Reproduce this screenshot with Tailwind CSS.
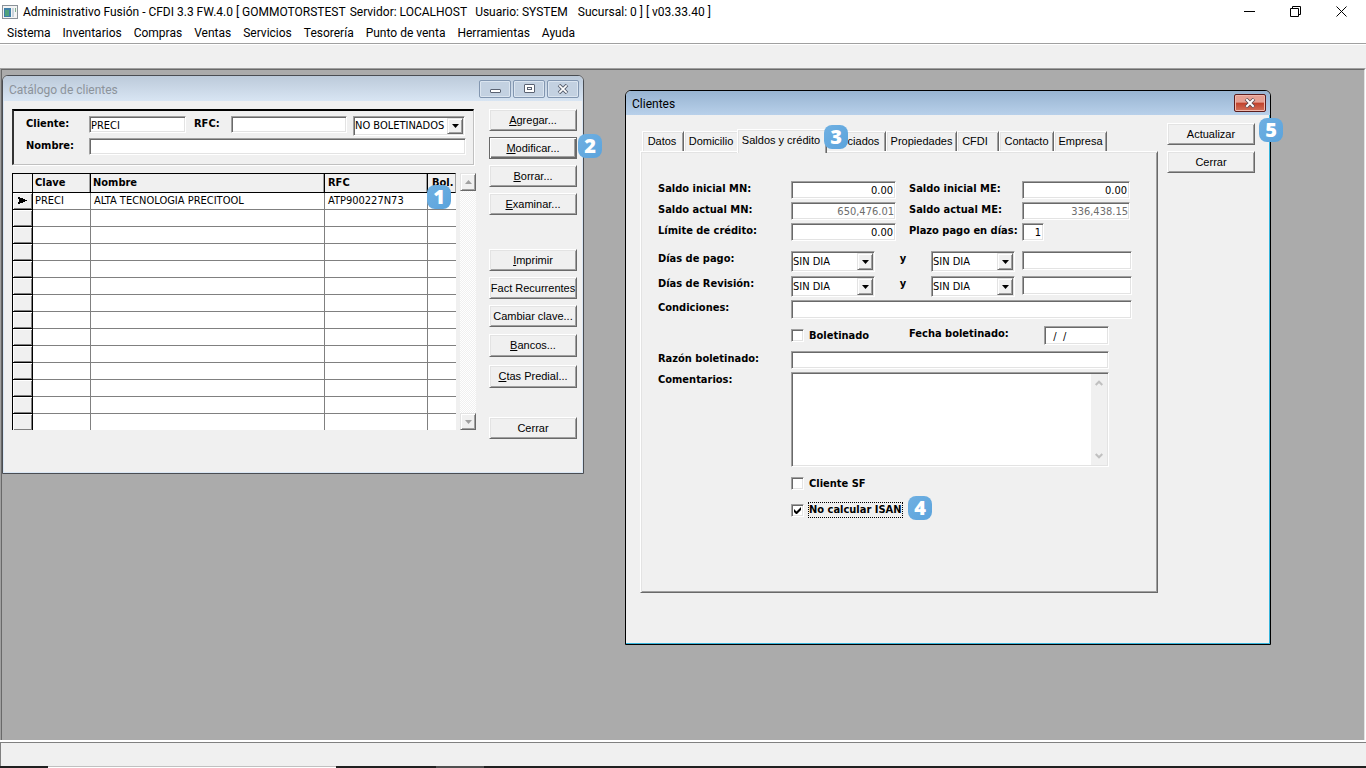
<!DOCTYPE html>
<html lang="es">
<head>
  <meta charset="UTF-8" />
  <title>Administrativo Fusión</title>
  <script src="https://cdn.jsdelivr.net/npm/@tailwindcss/browser@4"></script>
</head>
<body class="flex flex-col h-screen overflow-hidden bg-white text-black text-[12px] font-[Roboto,'Open_Sans',sans-serif]">

  <!-- Title bar -->
  <header class="flex items-center h-[23px] shrink-0 pl-[2px]">
    <svg class="w-4 h-[14px] mr-[5px]" viewBox="0 0 16 14">
      <rect x="0.5" y="0.5" width="15" height="13" fill="#f4f4f4" stroke="#8b9299" />
      <rect x="2" y="3" width="7" height="9" fill="#3f7fa8" />
      <rect x="3" y="5" width="4" height="6" fill="#4fa27c" />
      <rect x="10" y="3" width="2" height="9" fill="#c9d3dc" />
      <rect x="13" y="3" width="1" height="4" fill="#7fb08f" />
    </svg>
    <h1 class="flex whitespace-nowrap">
      <span>Administrativo Fusión - CFDI 3.3 FW.4.0 [ GOMMOTORSTEST</span>
      <span class="ml-1">Servidor: LOCALHOST</span>
      <span class="ml-2">Usuario: SYSTEM</span>
      <span class="ml-[10px]">Sucursal: 0 ] [ v03.33.40 ]</span>
    </h1>
    <div class="flex ml-auto mr-[2px]">
      <button class="grid place-items-center w-[46px] h-5" aria-label="Minimizar"><svg class="w-[11px] h-[11px]" viewBox="0 0 11 11"><path d="M0 5.5h11" stroke="#000" /></svg></button>
      <button class="grid place-items-center w-[46px] h-5" aria-label="Restaurar"><svg class="w-[11px] h-[11px]" viewBox="0 0 11 11" fill="none" stroke="#000"><path d="M0.5 2.5h8v8h-8z M2.5 2.5v-2h8v8h-2" /></svg></button>
      <button class="grid place-items-center w-[46px] h-5" aria-label="Cerrar ventana"><svg class="w-[11px] h-[11px]" viewBox="0 0 11 11"><path d="M0.5 0.5l10 10M10.5 0.5l-10 10" stroke="#000" /></svg></button>
    </div>
  </header>

  <!-- Menu -->
  <nav class="flex gap-3 items-center h-5 shrink-0 pl-[7px]">
    <a href="#">Sistema</a>
    <a href="#">Inventarios</a>
    <a href="#">Compras</a>
    <a href="#">Ventas</a>
    <a href="#">Servicios</a>
    <a href="#">Tesorería</a>
    <a href="#">Punto de venta</a>
    <a href="#">Herramientas</a>
    <a href="#">Ayuda</a>
  </nav>
  <div class="h-[25px] shrink-0 bg-[#f0f0f0] border-t border-[#a0a0a0] shadow-[inset_0_1px_#ffffff]"></div>

  <!-- Desktop -->
  <main class="flex flex-1 min-h-0 border-t border-l border-r border-t-[#a0a0a0] border-l-[#a0a0a0] border-r-white text-[11px]">
  <div class="relative flex-1 bg-[#ababab] border-t border-l border-r border-t-[#696969] border-l-[#696969] border-r-[#e3e3e3]">

    <!-- Customer catalogue -->
    <section class="absolute left-0 top-[5px] w-[582px] h-[399px] flex flex-col bg-[#f0f0f0] border border-[#4a4d52] rounded-t-md overflow-hidden">
      <div class="flex items-center h-[25px] shrink-0 pl-[6px] pr-1 bg-linear-to-b from-[#bccada] to-[#d8e5f3] text-[12px] text-[#8c939b]">
        <h2 class="flex-1 pt-[2px]">Catálogo de clientes</h2>
        <div class="flex gap-[2px]">
          <button class="grid place-items-center w-8 h-[18px] rounded-xs border border-[#8296b0] bg-[#c3d1e1] shadow-[inset_0_0_0_1px_#dbe5f0]" aria-label="Minimizar"><svg class="w-[11px] h-[10px]" viewBox="0 0 11 10"><rect x="0.5" y="5.5" width="10" height="3" rx="0.5" fill="#fff" stroke="#5a6272" /></svg></button>
          <button class="grid place-items-center w-8 h-[18px] rounded-xs border border-[#8296b0] bg-[#c3d1e1] shadow-[inset_0_0_0_1px_#dbe5f0]" aria-label="Maximizar"><svg class="w-[11px] h-[9px]" viewBox="0 0 11 9" fill="#fff" stroke="#5a6272"><rect x="0.5" y="0.5" width="10" height="8" rx="0.5" /><rect x="3.5" y="3.5" width="4" height="2" /></svg></button>
          <button class="grid place-items-center w-8 h-[18px] rounded-xs border border-[#8296b0] bg-[#c3d1e1] shadow-[inset_0_0_0_1px_#dbe5f0]" aria-label="Cerrar"><svg class="w-[12px] h-[10px]" viewBox="0 0 12 10"><path d="M2 1l8 8M10 1l-8 8" stroke="#5a6272" stroke-width="3.6" /><path d="M2.3 1.3l7.4 7.4M9.7 1.3l-7.4 7.4" stroke="#fff" stroke-width="1.7" /></svg></button>
        </div>
      </div>
      <div class="flex flex-1 gap-[13px] pl-2 pt-2 border-x border-b border-[#d9e6f4]">
        <div class="w-[464px]">
          <form class="w-[462px] h-14 pt-[5px] pl-3 border-t-2 border-l-2 border-b border-r border-t-black border-l-[#333333] border-b-[#c0c0c0] border-r-[#c0c0c0] shadow-[1px_1px_#ffffff] font-['DejaVu_Sans_Condensed','DejaVu_Sans',sans-serif]">
            <div class="flex items-start h-5">
              <label for="cliente" class="w-[63px] leading-[15px] font-bold">Cliente:</label>
              <input id="cliente" value="PRECI" class="w-[97px] h-[17px] px-px pt-px bg-white border border-t-[#a0a0a0] border-l-[#a0a0a0] border-b-white border-r-white shadow-[inset_1px_1px_#696969,inset_-1px_-1px_#e3e3e3]" />
              <label for="rfc" class="w-[37px] ml-2 leading-[15px] font-bold">RFC:</label>
              <input id="rfc" class="w-[116px] h-[17px] px-[2px] bg-white border border-t-[#a0a0a0] border-l-[#a0a0a0] border-b-white border-r-white shadow-[inset_1px_1px_#696969,inset_-1px_-1px_#e3e3e3]" />
              <div class="relative w-28 h-5 ml-[6px]">
                <select aria-label="Boletinados" class="appearance-none w-full h-full pl-px pt-px bg-white border border-t-[#a0a0a0] border-l-[#a0a0a0] border-b-white border-r-white shadow-[inset_1px_1px_#696969,inset_-1px_-1px_#e3e3e3]"><option>NO BOLETINADOS</option></select>
                <span class="absolute right-[2px] top-[2px] bottom-[2px] w-4 grid place-items-center bg-[#f0f0f0] border border-t-[#e3e3e3] border-l-[#e3e3e3] border-b-[#696969] border-r-[#696969] shadow-[inset_1px_1px_#ffffff,inset_-1px_-1px_#a0a0a0] pointer-events-none"><svg class="w-[7px] h-1" viewBox="0 0 7 4"><path d="M0 0h7L3.5 4z" /></svg></span>
              </div>
            </div>
            <div class="flex items-start mt-[2px]">
              <label for="nombre" class="w-[63px] leading-[15px] font-bold">Nombre:</label>
              <input id="nombre" class="w-[377px] h-[17px] px-[2px] bg-white border border-t-[#a0a0a0] border-l-[#a0a0a0] border-b-white border-r-white shadow-[inset_1px_1px_#696969,inset_-1px_-1px_#e3e3e3]" />
            </div>
          </form>

          <div class="flex justify-between mt-2 h-[257px]">
            <div class="w-[444px] overflow-hidden bg-white">
              <table class="w-full table-fixed border-separate border-spacing-0 font-['DejaVu_Sans_Condensed','DejaVu_Sans',sans-serif] leading-4">
                <colgroup><col class="w-[21px]" /><col class="w-[58px]" /><col class="w-[234px]" /><col class="w-[103px]" /><col class="w-7" /></colgroup>
                <thead class="leading-[18px]">
                  <tr class="h-5 bg-[#f0f0f0] text-left align-top">
                    <th class="p-0 border-y border-x border-black"></th>
                    <th class="p-0 pl-[2px] border-y border-r border-black shadow-[inset_-1px_0_#a0a0a0]">Clave</th>
                    <th class="p-0 pl-[2px] border-y border-r border-black shadow-[inset_-1px_0_#a0a0a0]">Nombre</th>
                    <th class="p-0 pl-[3px] border-y border-r border-black shadow-[inset_-1px_0_#a0a0a0]">RFC</th>
                    <th class="p-0 pl-1 border-y border-r border-y-black border-r-[#a0a0a0]">Bol.</th>
                  </tr>
                </thead>
                <tbody id="filas">
                  <tr class="h-[17px] align-top">
                    <td class="p-0 border-x border-b border-black bg-[#f0f0f0] shadow-[inset_1px_1px_#ffffff,inset_-1px_-1px_#808080]"><svg class="w-[9px] h-[7px] mt-1 ml-[5px]" viewBox="0 0 9 7"><path d="M0 0h2v1h3v1h2v1h2v1h-2v1h-2v1h-3v1h-2v-2h1v-3h-1z" /></svg></td>
                    <td class="p-0 pl-[2px] border-r border-b border-[#808080]">PRECI</td>
                    <td class="p-0 pl-[3px] border-r border-b border-[#808080]">ALTA TECNOLOGIA PRECITOOL</td>
                    <td class="p-0 pl-[3px] border-r border-b border-[#808080]">ATP900227N73</td>
                    <td class="p-0 border-b border-[#808080]"></td>
                  </tr>
                </tbody>
              </table>
            </div>
            <div class="flex flex-col justify-between w-4 bg-[repeating-conic-gradient(#ffffff_0_25%,#f0f0f0_0_50%)] bg-[length:2px_2px]">
              <button class="grid place-items-center h-[18px] bg-[#f0f0f0] border border-t-[#e3e3e3] border-l-[#e3e3e3] border-b-[#696969] border-r-[#696969] shadow-[inset_1px_1px_#ffffff,inset_-1px_-1px_#a0a0a0]" aria-label="Subir"><svg class="w-[7px] h-1" viewBox="0 0 7 4"><path d="M0 4h7L3.5 0z" fill="#a0a0a0" /></svg></button>
              <button class="grid place-items-center h-[17px] bg-[#f0f0f0] border border-t-[#e3e3e3] border-l-[#e3e3e3] border-b-[#696969] border-r-[#696969] shadow-[inset_1px_1px_#ffffff,inset_-1px_-1px_#a0a0a0]" aria-label="Bajar"><svg class="w-[7px] h-1" viewBox="0 0 7 4"><path d="M0 0h7L3.5 4z" fill="#a0a0a0" /></svg></button>
            </div>
          </div>
        </div>

        <div class="flex flex-col gap-[6px] w-[88px] font-['Liberation_Sans',Arial,sans-serif]">
          <button class="h-[22px] bg-[#f0f0f0] border border-t-white border-l-white border-b-[#696969] border-r-[#696969] shadow-[inset_1px_1px_#e3e3e3,inset_-1px_-1px_#a0a0a0]"><u>A</u>gregar...</button>
          <button class="h-[22px] bg-[#f0f0f0] border border-[#696969] shadow-[inset_1px_1px_#ffffff,inset_-1px_-1px_#696969,inset_-2px_-2px_#a0a0a0]"><u>M</u>odificar...</button>
          <button class="h-[22px] bg-[#f0f0f0] border border-t-white border-l-white border-b-[#696969] border-r-[#696969] shadow-[inset_1px_1px_#e3e3e3,inset_-1px_-1px_#a0a0a0]"><u>B</u>orrar...</button>
          <button class="h-[22px] bg-[#f0f0f0] border border-t-white border-l-white border-b-[#696969] border-r-[#696969] shadow-[inset_1px_1px_#e3e3e3,inset_-1px_-1px_#a0a0a0]"><u>E</u>xaminar...</button>
          <button class="h-[22px] mt-7 bg-[#f0f0f0] border border-t-white border-l-white border-b-[#696969] border-r-[#696969] shadow-[inset_1px_1px_#e3e3e3,inset_-1px_-1px_#a0a0a0]"><u>I</u>mprimir</button>
          <button class="h-[22px] whitespace-nowrap bg-[#f0f0f0] border border-t-white border-l-white border-b-[#696969] border-r-[#696969] shadow-[inset_1px_1px_#e3e3e3,inset_-1px_-1px_#a0a0a0]">Fact Recurrentes</button>
          <button class="h-[22px] bg-[#f0f0f0] border border-t-white border-l-white border-b-[#696969] border-r-[#696969] shadow-[inset_1px_1px_#e3e3e3,inset_-1px_-1px_#a0a0a0]">Cambiar clave...</button>
          <button class="h-[23px] mt-px bg-[#f0f0f0] border border-t-white border-l-white border-b-[#696969] border-r-[#696969] shadow-[inset_1px_1px_#e3e3e3,inset_-1px_-1px_#a0a0a0]"><u>B</u>ancos...</button>
          <button class="h-[23px] mt-[2px] bg-[#f0f0f0] border border-t-white border-l-white border-b-[#696969] border-r-[#696969] shadow-[inset_1px_1px_#e3e3e3,inset_-1px_-1px_#a0a0a0]"><u>C</u>tas Predial...</button>
          <button class="h-[22px] mt-[23px] bg-[#f0f0f0] border border-t-white border-l-white border-b-[#696969] border-r-[#696969] shadow-[inset_1px_1px_#e3e3e3,inset_-1px_-1px_#a0a0a0]">Cerrar</button>
        </div>
      </div>
    </section>

    <!-- Customer detail -->
    <section class="absolute left-[623px] top-5 w-[646px] h-[555px] flex flex-col bg-[#f0f0f0] border border-black rounded-t-md overflow-hidden">
      <div class="flex items-center h-6 shrink-0 pl-[6px] pr-1 bg-linear-to-b from-[#98b4d1] to-[#b8d0ea] text-[12px]">
        <h2 class="flex-1 pt-[2px]">Clientes</h2>
        <button class="grid place-items-center w-8 h-[18px] rounded-xs border border-[#5c1d1d] bg-linear-to-b from-[#e5a093] from-45% via-[#c1412b] via-50% to-[#d2705a] shadow-[inset_0_0_0_1px_#f0b8ac]" aria-label="Cerrar"><svg class="w-[12px] h-[10px]" viewBox="0 0 12 10"><path d="M2 1l8 8M10 1l-8 8" stroke="#5a4a50" stroke-width="3.6" /><path d="M2.3 1.3l7.4 7.4M9.7 1.3l-7.4 7.4" stroke="#fff" stroke-width="2" /></svg></button>
      </div>
      <div class="flex flex-1 items-start gap-[9px] pl-[14px] pt-2 border-r border-b border-[#37b5dc]">
        <div class="w-[518px] mt-[6px]">
          <div role="tablist" class="flex items-end h-[22px] pl-[2px] font-['Liberation_Sans',Arial,sans-serif]">
            <button role="tab" class="w-[42px] h-5 pr-[2px] border-t border-l border-t-white border-l-white border-r border-r-[#696969] shadow-[inset_1px_1px_#e3e3e3,inset_-1px_0_#a0a0a0]">Datos</button>
            <button role="tab" class="w-[53px] h-5 border-t border-l border-white shadow-[inset_1px_1px_#e3e3e3]">Domicilio</button>
            <button role="tab" aria-selected="true" class="relative z-10 w-[90px] h-6 -mb-[2px] pb-[2px] pr-[2px] bg-[#f0f0f0] border-t border-l border-t-white border-l-white border-r border-r-[#696969] shadow-[inset_1px_1px_#e3e3e3,inset_-1px_0_#a0a0a0]">Saldos y crédito</button>
            <button role="tab" class="w-[59px] h-5 pr-1 border-t border-r border-t-white border-r-[#696969] shadow-[inset_0_1px_#e3e3e3,inset_-1px_0_#a0a0a0]">Asociados</button>
            <button role="tab" class="w-[71px] h-5 border-t border-l border-t-white border-l-white border-r border-r-[#696969] shadow-[inset_1px_1px_#e3e3e3,inset_-1px_0_#a0a0a0]">Propiedades</button>
            <button role="tab" class="w-[42px] h-5 pr-[6px] border-t border-l border-t-white border-l-white border-r border-r-[#696969] shadow-[inset_1px_1px_#e3e3e3,inset_-1px_0_#a0a0a0]">CFDI</button>
            <button role="tab" class="w-[55px] h-5 border-t border-l border-t-white border-l-white border-r border-r-[#696969] shadow-[inset_1px_1px_#e3e3e3,inset_-1px_0_#a0a0a0]">Contacto</button>
            <button role="tab" class="w-[53px] h-5 border-t border-l border-t-white border-l-white border-r border-r-[#696969] shadow-[inset_1px_1px_#e3e3e3,inset_-1px_0_#a0a0a0]">Empresa</button>
          </div>

          <form role="tabpanel" class="h-[442px] pt-[29px] pl-[17px] border border-t-white border-l-white border-b-[#696969] border-r-[#696969] shadow-[inset_1px_1px_#e3e3e3,inset_-1px_-1px_#a0a0a0] font-['DejaVu_Sans_Condensed','DejaVu_Sans',sans-serif] leading-[15px]">
            <div class="flex flex-col gap-[3px]">
              <div class="flex items-start">
                <label for="simn" class="w-[133px] font-bold">Saldo inicial MN:</label>
                <input id="simn" value="0.00" class="w-[105px] h-[18px] px-[2px] text-right bg-white border border-t-[#a0a0a0] border-l-[#a0a0a0] border-b-white border-r-white shadow-[inset_1px_1px_#696969,inset_-1px_-1px_#e3e3e3]" />
                <label for="sime" class="w-[113px] ml-[13px] font-bold">Saldo inicial ME:</label>
                <input id="sime" value="0.00" class="w-[108px] h-[18px] px-[2px] text-right bg-white border border-t-[#a0a0a0] border-l-[#a0a0a0] border-b-white border-r-white shadow-[inset_1px_1px_#696969,inset_-1px_-1px_#e3e3e3]" />
              </div>
              <div class="flex items-start">
                <label for="samn" class="w-[133px] font-bold">Saldo actual MN:</label>
                <input id="samn" value="650,476.01" disabled class="w-[105px] h-[18px] px-px pt-px text-right text-[#6d6d6d] bg-white border border-t-[#a0a0a0] border-l-[#a0a0a0] border-b-white border-r-white shadow-[inset_1px_1px_#696969,inset_-1px_-1px_#e3e3e3]" />
                <label for="same" class="w-[113px] ml-[13px] font-bold">Saldo actual ME:</label>
                <input id="same" value="336,438.15" disabled class="w-[108px] h-[18px] px-px pt-px text-right text-[#6d6d6d] bg-white border border-t-[#a0a0a0] border-l-[#a0a0a0] border-b-white border-r-white shadow-[inset_1px_1px_#696969,inset_-1px_-1px_#e3e3e3]" />
              </div>
              <div class="flex items-start">
                <label for="limite" class="w-[133px] font-bold">Límite de crédito:</label>
                <input id="limite" value="0.00" class="w-[105px] h-[18px] px-[2px] pt-px text-right bg-white border border-t-[#a0a0a0] border-l-[#a0a0a0] border-b-white border-r-white shadow-[inset_1px_1px_#696969,inset_-1px_-1px_#e3e3e3]" />
                <label for="plazo" class="w-[113px] ml-[13px] font-bold whitespace-nowrap">Plazo pago en días:</label>
                <input id="plazo" value="1" class="w-[22px] h-[18px] px-[2px] pt-px text-right bg-white border border-t-[#a0a0a0] border-l-[#a0a0a0] border-b-white border-r-white shadow-[inset_1px_1px_#696969,inset_-1px_-1px_#e3e3e3]" />
              </div>
            </div>

            <div class="flex flex-col gap-1 mt-[10px]">
              <div class="flex items-start">
                <label for="pago1" class="w-[133px] font-bold">Días de pago:</label>
                <div class="relative w-[84px] h-[21px]">
                  <select id="pago1" class="appearance-none w-full h-full pl-[1px] bg-white border border-t-[#a0a0a0] border-l-[#a0a0a0] border-b-white border-r-white shadow-[inset_1px_1px_#696969,inset_-1px_-1px_#e3e3e3]"><option>SIN DIA</option></select>
                  <span class="absolute right-[2px] top-[2px] bottom-[2px] w-4 grid place-items-center bg-[#f0f0f0] border border-t-[#e3e3e3] border-l-[#e3e3e3] border-b-[#696969] border-r-[#696969] shadow-[inset_1px_1px_#ffffff,inset_-1px_-1px_#a0a0a0] pointer-events-none"><svg class="w-[7px] h-1" viewBox="0 0 7 4"><path d="M0 0h7L3.5 4z" /></svg></span>
                </div>
                <label for="pago2" class="w-14 text-center font-bold">y</label>
                <div class="relative w-[84px] h-[21px]">
                  <select id="pago2" class="appearance-none w-full h-full pl-[1px] bg-white border border-t-[#a0a0a0] border-l-[#a0a0a0] border-b-white border-r-white shadow-[inset_1px_1px_#696969,inset_-1px_-1px_#e3e3e3]"><option>SIN DIA</option></select>
                  <span class="absolute right-[2px] top-[2px] bottom-[2px] w-4 grid place-items-center bg-[#f0f0f0] border border-t-[#e3e3e3] border-l-[#e3e3e3] border-b-[#696969] border-r-[#696969] shadow-[inset_1px_1px_#ffffff,inset_-1px_-1px_#a0a0a0] pointer-events-none"><svg class="w-[7px] h-1" viewBox="0 0 7 4"><path d="M0 0h7L3.5 4z" /></svg></span>
                </div>
                <input aria-label="Horario de pago" class="w-[110px] h-[19px] ml-[7px] px-[2px] bg-white border border-t-[#a0a0a0] border-l-[#a0a0a0] border-b-white border-r-white shadow-[inset_1px_1px_#696969,inset_-1px_-1px_#e3e3e3]" />
              </div>
              <div class="flex items-start">
                <label for="rev1" class="w-[133px] font-bold">Días de Revisión:</label>
                <div class="relative w-[84px] h-[21px]">
                  <select id="rev1" class="appearance-none w-full h-full pl-[1px] bg-white border border-t-[#a0a0a0] border-l-[#a0a0a0] border-b-white border-r-white shadow-[inset_1px_1px_#696969,inset_-1px_-1px_#e3e3e3]"><option>SIN DIA</option></select>
                  <span class="absolute right-[2px] top-[2px] bottom-[2px] w-4 grid place-items-center bg-[#f0f0f0] border border-t-[#e3e3e3] border-l-[#e3e3e3] border-b-[#696969] border-r-[#696969] shadow-[inset_1px_1px_#ffffff,inset_-1px_-1px_#a0a0a0] pointer-events-none"><svg class="w-[7px] h-1" viewBox="0 0 7 4"><path d="M0 0h7L3.5 4z" /></svg></span>
                </div>
                <label for="rev2" class="w-14 text-center font-bold">y</label>
                <div class="relative w-[84px] h-[21px]">
                  <select id="rev2" class="appearance-none w-full h-full pl-[1px] bg-white border border-t-[#a0a0a0] border-l-[#a0a0a0] border-b-white border-r-white shadow-[inset_1px_1px_#696969,inset_-1px_-1px_#e3e3e3]"><option>SIN DIA</option></select>
                  <span class="absolute right-[2px] top-[2px] bottom-[2px] w-4 grid place-items-center bg-[#f0f0f0] border border-t-[#e3e3e3] border-l-[#e3e3e3] border-b-[#696969] border-r-[#696969] shadow-[inset_1px_1px_#ffffff,inset_-1px_-1px_#a0a0a0] pointer-events-none"><svg class="w-[7px] h-1" viewBox="0 0 7 4"><path d="M0 0h7L3.5 4z" /></svg></span>
                </div>
                <input aria-label="Horario de revisión" class="w-[110px] h-[19px] ml-[7px] px-[2px] bg-white border border-t-[#a0a0a0] border-l-[#a0a0a0] border-b-white border-r-white shadow-[inset_1px_1px_#696969,inset_-1px_-1px_#e3e3e3]" />
              </div>
            </div>

            <div class="flex items-start mt-[3px]">
              <label for="condiciones" class="w-[133px] font-bold">Condiciones:</label>
              <input id="condiciones" class="w-[341px] h-[19px] px-[2px] bg-white border border-t-[#a0a0a0] border-l-[#a0a0a0] border-b-white border-r-white shadow-[inset_1px_1px_#696969,inset_-1px_-1px_#e3e3e3]" />
            </div>

            <div class="flex items-start mt-[7px] pl-[133px]">
              <div class="flex items-center gap-[5px] w-[118px] pt-[2px]">
                <input id="boletinado" type="checkbox" class="appearance-none w-[13px] h-[13px] bg-white border border-t-[#a0a0a0] border-l-[#a0a0a0] border-b-white border-r-white shadow-[inset_1px_1px_#696969,inset_-1px_-1px_#e3e3e3]" />
                <label for="boletinado" class="font-bold">Boletinado</label>
              </div>
              <label for="fecha" class="w-[135px] font-bold">Fecha boletinado:</label>
              <input id="fecha" value="  /  /" class="w-[65px] h-[19px] px-[2px] pt-px bg-white border border-t-[#a0a0a0] border-l-[#a0a0a0] border-b-white border-r-white shadow-[inset_1px_1px_#696969,inset_-1px_-1px_#e3e3e3]" />
            </div>

            <div class="flex items-start mt-[6px]">
              <label for="razon" class="w-[133px] font-bold">Razón boletinado:</label>
              <input id="razon" class="w-[318px] h-[18px] px-[2px] bg-white border border-t-[#a0a0a0] border-l-[#a0a0a0] border-b-white border-r-white shadow-[inset_1px_1px_#696969,inset_-1px_-1px_#e3e3e3]" />
            </div>

            <div class="flex items-start mt-[3px]">
              <label for="comentarios" class="w-[133px] font-bold">Comentarios:</label>
              <div class="flex w-[318px] h-[95px] p-px bg-white border border-t-[#a0a0a0] border-l-[#a0a0a0] border-b-white border-r-white shadow-[inset_1px_1px_#696969,inset_-1px_-1px_#e3e3e3]">
                <textarea id="comentarios" class="flex-1 resize-none bg-white"></textarea>
                <div class="flex flex-col justify-between items-center w-4 py-[6px] bg-[#f0f0f0]">
                  <svg class="w-2 h-[6px]" viewBox="0 0 8 6"><path d="M0.7 5L4 1.7L7.3 5" fill="none" stroke="#c0c0c0" stroke-width="2" /></svg>
                  <svg class="w-2 h-[6px]" viewBox="0 0 8 6"><path d="M0.7 1L4 4.3L7.3 1" fill="none" stroke="#c0c0c0" stroke-width="2" /></svg>
                </div>
              </div>
            </div>

            <div class="flex items-center gap-[5px] mt-[9px] pl-[133px]">
              <input id="sf" type="checkbox" class="appearance-none w-[13px] h-[13px] bg-white border border-t-[#a0a0a0] border-l-[#a0a0a0] border-b-white border-r-white shadow-[inset_1px_1px_#696969,inset_-1px_-1px_#e3e3e3]" />
              <label for="sf" class="font-bold">Cliente SF</label>
            </div>
            <div class="flex items-center gap-1 mt-[11px] pl-[133px]">
              <span class="relative w-[13px] h-[13px]">
                <input id="isan" type="checkbox" checked class="block appearance-none w-[13px] h-[13px] bg-white border border-t-[#a0a0a0] border-l-[#a0a0a0] border-b-white border-r-white shadow-[inset_1px_1px_#696969,inset_-1px_-1px_#e3e3e3]" />
                <svg class="absolute left-[3px] top-[3px] w-[7px] h-[7px] pointer-events-none" viewBox="0 0 7 7"><path d="M0 2v3l2 2h1l4-4V0L2.5 4.5z" /></svg>
              </span>
              <label for="isan" class="font-bold border border-dotted border-black leading-[14px]">No calcular ISAN</label>
            </div>
          </form>
        </div>

        <div class="flex flex-col gap-[6px] w-[88px] font-['Liberation_Sans',Arial,sans-serif]">
          <button class="h-[22px] bg-[#f0f0f0] border border-t-white border-l-white border-b-[#696969] border-r-[#696969] shadow-[inset_1px_1px_#e3e3e3,inset_-1px_-1px_#a0a0a0]">Actualizar</button>
          <button class="h-[22px] bg-[#f0f0f0] border border-t-white border-l-white border-b-[#696969] border-r-[#696969] shadow-[inset_1px_1px_#e3e3e3,inset_-1px_-1px_#a0a0a0]">Cerrar</button>
        </div>
      </div>
    </section>

    <!-- Step badges -->
    <span class="absolute z-20 left-[425px] top-[115px] grid place-items-center w-6 h-6 rounded-[8px] bg-linear-to-br from-[#6fb0e2] to-[#5ba3dc] font-['Open_Sans',sans-serif] text-white text-[20px] leading-[24px] font-extrabold">1</span>
    <span class="absolute z-20 left-[576px] top-16 grid place-items-center w-6 h-6 rounded-[8px] bg-linear-to-br from-[#6fb0e2] to-[#5ba3dc] font-['Open_Sans',sans-serif] text-white text-[20px] leading-[24px] font-extrabold">2</span>
    <span class="absolute z-20 left-[822px] top-[55px] grid place-items-center w-6 h-6 rounded-[8px] bg-linear-to-br from-[#6fb0e2] to-[#5ba3dc] font-['Open_Sans',sans-serif] text-white text-[20px] leading-[24px] font-extrabold">3</span>
    <span class="absolute z-20 left-[906px] top-[426px] grid place-items-center w-6 h-6 rounded-[8px] bg-linear-to-br from-[#6fb0e2] to-[#5ba3dc] font-['Open_Sans',sans-serif] text-white text-[20px] leading-[24px] font-extrabold">4</span>
    <span class="absolute z-20 left-[1257px] top-12 grid place-items-center w-6 h-6 rounded-[8px] bg-linear-to-br from-[#6fb0e2] to-[#5ba3dc] font-['Open_Sans',sans-serif] text-white text-[20px] leading-[24px] font-extrabold">5</span>
  </div>
  </main>

  <!-- Status bar -->
  <footer class="shrink-0 border-t-2 border-white">
    <div class="h-6 bg-[#f0f0f0] border-t border-l border-[#808080]"></div>
    <div class="flex h-[2px] bg-[#202020]">
      <div class="w-[288px] ml-12 bg-white border-t border-[#c0c0c0]"></div>
      <div class="w-12 ml-[100px] bg-[#505050]"></div>
    </div>
  </footer>

  <script>
    // empty grid rows below the first record
    const filas = document.getElementById('filas');
    for (let i = 0; i < 13; i++) {
      filas.insertAdjacentHTML('beforeend', `
        <tr class="h-[17px]">
          <td class="p-0 border-x border-b border-black bg-[#f0f0f0] shadow-[inset_1px_1px_#ffffff,inset_-1px_-1px_#808080]"></td>
          <td class="p-0 border-r border-b border-[#808080]"></td>
          <td class="p-0 border-r border-b border-[#808080]"></td>
          <td class="p-0 border-r border-b border-[#808080]"></td>
          <td class="p-0 border-b border-[#808080]"></td>
        </tr>`);
    }
  </script>
</body>
</html>
